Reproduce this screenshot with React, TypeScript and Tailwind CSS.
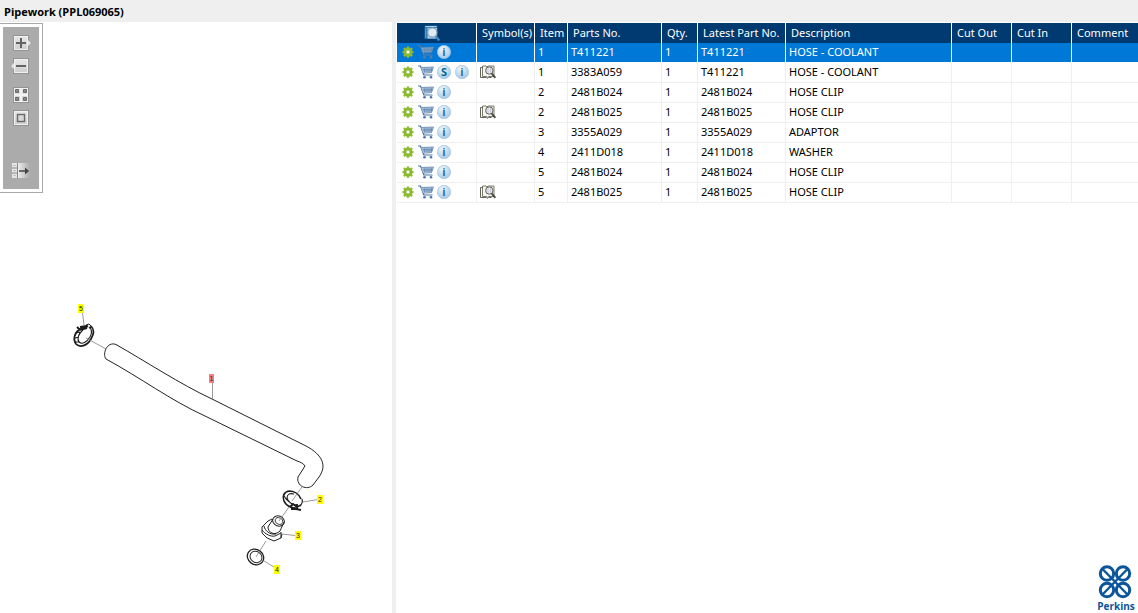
import React from "react";

type Part = {
  item: string;
  no: string;
  latest: string;
  desc: string;
  superseded?: boolean;
  book?: boolean;
};

const parts: Part[] = [
  { item: "1", no: "T411221", latest: "T411221", desc: "HOSE - COOLANT" },
  { item: "1", no: "3383A059", latest: "T411221", desc: "HOSE - COOLANT", superseded: true, book: true },
  { item: "2", no: "2481B024", latest: "2481B024", desc: "HOSE CLIP" },
  { item: "2", no: "2481B025", latest: "2481B025", desc: "HOSE CLIP", book: true },
  { item: "3", no: "3355A029", latest: "3355A029", desc: "ADAPTOR" },
  { item: "4", no: "2411D018", latest: "2411D018", desc: "WASHER" },
  { item: "5", no: "2481B024", latest: "2481B024", desc: "HOSE CLIP" },
  { item: "5", no: "2481B025", latest: "2481B025", desc: "HOSE CLIP", book: true },
];

const headers = ["Symbol(s)", "Item", "Parts No.", "Qty.", "Latest Part No.", "Description", "Cut Out", "Cut In", "Comment"];

function Gear() {
  return (
    <svg viewBox="0 0 13 12" className="block h-3 w-[13px]">
      <path
        d="M4.700 .5h2.600v1.400l1 .4 1-1 1.600 1.600-1 1 .4 1H11.500v2.400h-1.200l-.4 1 1 1-1.600 1.700-1-1-1 .4v1.400H4.700V10.400l-1-.4-1 1L1.100 9.300l1-1-.4-1H.5V4.900h1.200l.4-1-1-1L2.700 1.300l1 1 1-.4z"
        fill="#8dbb2f"
      />
      <circle cx="6" cy="6.100" r="2" fill="#fff" stroke="#79a424" strokeWidth=".6" />
    </svg>
  );
}

function Cart({ active }: { active: boolean }) {
  const c = active ? "#5f7f9f" : "#4a74a8";
  return (
    <svg viewBox="0 0 16 14" className="block h-3.5 w-4">
      <path d="M0 1h2.500l3.300 9h8.700" fill="none" stroke={c} strokeWidth="1.200" />
      <path d="M3.200 2.500L15.500 2l-2 5.500H5z" fill={active ? "#84b4e2" : "#dce7f3"} />
      <path d="M3.200 2.500L15.500 2l-2 5.500-8.300.8M3.800 4.200h11M4.400 5.900h9.800M6 2.500l.5 5M8 2.500v5M10 2.500v5M12 2.500l-.2 5M13.800 2.300l-.5 4" fill="none" stroke={c} strokeWidth=".7" />
      <circle cx="6.500" cy="12.200" r="1.300" fill={c} />
      <circle cx="13" cy="12.200" r="1.300" fill={c} />
    </svg>
  );
}

function Badge({ letter }: { letter: "i" | "S" }) {
  return (
    <svg viewBox="0 0 15 14" className="block h-3.5 w-[15px]">
      <defs>
        <radialGradient id="badge" cx=".4" cy=".3" r=".7">
          <stop offset="0" stopColor="#f0f7fc" />
          <stop offset="1" stopColor="#a3c8e4" />
        </radialGradient>
      </defs>
      <circle cx="7" cy="7" r="6.700" fill="url(#badge)" stroke="#9cc0de" strokeWidth=".6" />
      <text x="7" y="11" textAnchor="middle" fontSize="11" fontWeight="700" fontFamily="Noto Sans, sans-serif" fill={letter === "S" ? "#00668f" : "#2f6db0"}>
        {letter}
      </text>
    </svg>
  );
}

function Book() {
  return (
    <svg viewBox="0 0 16 14" className="block h-3.5 w-4">
      <path d="M2.500 1H6l1 .8L8.500 1H14v10.500H8.500l-1 .7-1-.7h-4z" fill="#f6f6f0" stroke="#6b6b5c" strokeWidth=".9" />
      <path d="M2.500 2.500h-2v10h6l1 .8 1-.8h3" fill="none" stroke="#55554a" strokeWidth=".9" />
      <circle cx="9.300" cy="5.500" r="3.700" fill="#e6e7f2" stroke="#5c5c55" strokeWidth="1" />
      <path d="M8 3.500v4M10.500 3.500v4" stroke="#b5b5c5" strokeWidth=".7" />
      <path d="M11.800 8.600l3.500 4.200" stroke="#45453c" strokeWidth="1.900" />
    </svg>
  );
}

function ListSearch() {
  return (
    <svg viewBox="0 0 16 16" className="block h-4 w-4" aria-label="Details">
      <path d="M.5 .5h13v13.500H.5z" fill="#1b6fa8" />
      <path d="M3.500 3H13v10.500H3.500z" fill="#a9d3ea" />
      <path d="M1.300 4h1M1.300 6h1M1.300 8h1M1.300 10h1M1.300 12h1M1.500 1.700h11" stroke="#e4f2fa" strokeWidth=".9" />
      <circle cx="8.300" cy="7.500" r="4.600" fill="#dfeaf3" stroke="#8aa0b4" strokeWidth="1.200" />
      <path d="M11.700 11.200l3.600 4.300" stroke="#3f86c4" strokeWidth="2.200" />
    </svg>
  );
}

type Tool = "in" | "out" | "fit" | "actual" | "panel";

function ToolIcon({ kind }: { kind: Tool }) {
  return (
    <svg viewBox="0 0 20 18" className="block h-[18px] w-5">
      <defs>
        <linearGradient id="key" x1="0" y1="0" x2="0" y2="1">
          <stop offset="0" stopColor="#e8e8e8" />
          <stop offset="1" stopColor="#cdcdcd" />
        </linearGradient>
        <linearGradient id="fade">
          <stop offset="0" stopColor="#ececec" />
          <stop offset="1" stopColor="#ababab" />
        </linearGradient>
      </defs>
      {kind !== "panel" && <rect x="2.500" y="1.500" width="15" height="15" fill="url(#key)" stroke="#949494" />}
      {kind !== "panel" && <rect x="3.500" y="2.500" width="13" height="13" fill="none" stroke="#f0f0f0" />}
      {kind === "in" && <path d="M17 6l3 3-3 3z" fill="#e4e4e4" />}
      {kind === "out" && <path d="M3 6L0 9l3 3z" fill="#e4e4e4" />}
      {kind === "in" && <path d="M5 9h10M10 4v10" stroke="#636363" strokeWidth="2" />}
      {kind === "out" && <path d="M5 9h10" stroke="#636363" strokeWidth="2" />}
      {kind === "fit" && (
        <g>
          <path d="M10 2v14M3 9h14" stroke="#f2f2f2" strokeWidth="2" />
          <path d="M4.500 3.500h3v3h-3zM12.500 3.500h3v3h-3zM4.500 11.500h3v3h-3zM12.500 11.500h3v3h-3z" fill="#8a8a8a" stroke="#6a6a6a" />
        </g>
      )}
      {kind === "actual" && <rect x="6.500" y="5.500" width="7" height="7" fill="#d8d8d8" stroke="#686868" strokeWidth="1.400" />}
      {kind === "panel" && (
        <g>
          <rect x="7" y="1" width="12" height="15" fill="url(#fade)" />
          <path d="M1 1h5v15H1z" fill="#e4e4e4" />
          <path d="M1 6h5M1 11h5M6.500 1v15" stroke="#8a8a8a" />
          <path d="M2.500 3.500h2M2.500 8.500h2M2.500 13.500h2" stroke="#b4b4b4" />
          <path d="M8 9h7" stroke="#444" strokeWidth="1.500" />
          <path d="M14 5.500L18 9l-4 3.500z" fill="#444" />
        </g>
      )}
    </svg>
  );
}

function ToolButton({ kind, label }: { kind: Tool; label: string }) {
  return (
    <button type="button" aria-label={label} className="block cursor-pointer">
      <ToolIcon kind={kind} />
    </button>
  );
}

function Callout({ x, y, n, active }: { x: number; y: number; n: string; active?: boolean }) {
  return (
    <g>
      <rect x={x} y={y} width={active ? 5 : 6} height="9" fill={active ? "#fa8080" : "#ffff00"} />
      <text x={x + (active ? 2.5 : 3)} y={y + 7} textAnchor="middle" fontSize="7" fontFamily="Liberation Sans, sans-serif" fill="#222">
        {n}
      </text>
    </g>
  );
}

function Diagram() {
  return (
    <svg viewBox="0 22 392 591" className="block w-full" role="img" aria-label="Pipework exploded view">
      <g fill="none" stroke="#222" strokeWidth="1">
        <path d="M116 344.500C145 361 180 384 212 399L306 446C323 455 327 466 319 477L313 485C307 491 296 486 298 477L305 466C303 463 300 462 297 461L205 416C170 400 141 378 106 359C102 354 107 341 116 344.500" />
      </g>
      <g fill="none" stroke="#1c1c1c">
        <path d="M79 330c-5 3-6 10-3 14 4 4 11 2 15-5 3-5 3-10 0-13" strokeWidth="1.700" />
        <path d="M83 330c-5 4-6 9-4 12 3 3 8 0 11-5 2-4 2-8-1-10M76 333l4-1M75 338l4-1M76 342l4 0" strokeWidth="1.100" />
        <path d="M79 330l9-4M77 327l3 3 7-2M80 327l7-1" strokeWidth="2" />
        <path d="M86 325l3-1 2 2-1 3" strokeWidth="1" />
        <path d="M298 508c-5 1-12-2-14-7-2-5 0-9 5-10 5 0 10 3 12 8" strokeWidth="1.700" />
        <path d="M297 505c-5 0-9-3-10-7 0-4 3-5 7-4M302 499c1 3 0 5-2 7M284 496c3 5 7 8 12 9" strokeWidth="1.100" />
        <path d="M290 507l3-3 4 3 4-2M291 509h5l5 1M297 504v5" strokeWidth="1.800" />
      </g>
      <g fill="none" stroke="#222">
        <path d="M272 519l-4 2-6 6v6l5 5 7 3 7-3 1-4M262 530c3 4 9 7 13 6l6-3M273 519l-5 8c0 6 7 9 12 4l4-9M264 526c1 5 6 9 12 8M281 532v6" />
        <ellipse cx="278.500" cy="521" rx="6" ry="5" transform="rotate(20 278.500 521)" />
        <ellipse cx="279" cy="521" rx="4" ry="3.200" transform="rotate(20 279 521)" strokeWidth=".8" />
        <ellipse cx="255.500" cy="557" rx="8.500" ry="7.500" transform="rotate(35 255.500 557)" strokeWidth="1.300" />
        <ellipse cx="256" cy="557" rx="6.200" ry="5.400" transform="rotate(35 256 557)" />
      </g>
      <g fill="none" stroke="#808080" strokeWidth=".8">
        <path d="M82.500 313l1.500 12M86 338l20 11M212.500 383v16M302 487l-10 14M303 502l15-2.500M289 507l-10 14M282 534l13 1.500M266 541l-10 16M264 561l10 6" />
      </g>
      <Callout x={78} y={304} n="5" />
      <Callout x={209} y={374} n="1" active />
      <Callout x={317} y={495} n="2" />
      <Callout x={295} y={531} n="3" />
      <Callout x={274} y={565} n="4" />
    </svg>
  );
}

function Logo() {
  return (
    <svg viewBox="0 0 42 48" className="h-12 w-[42px]" role="img" aria-label="Perkins">
      <g fill="none" stroke="#0b559c" strokeWidth="3">
        <circle cx="11" cy="8.500" r="6.700" />
        <circle cx="27" cy="8.500" r="6.700" />
        <circle cx="11" cy="25" r="6.700" />
        <circle cx="27" cy="25" r="6.700" />
        <path d="M6.500 4L31.500 29.500M31.500 4L6.500 29.500" strokeWidth="2.400" />
      </g>
      <text x="20" y="45" textAnchor="middle" fontSize="10" fontWeight="700" fontFamily="Open Sans, sans-serif" fill="#0b559c">
        Perkins
      </text>
    </svg>
  );
}

export default function App() {
  return (
    <div className="flex min-h-screen flex-col bg-white font-['Noto_Sans',sans-serif] text-[11px] leading-4 text-black">
      <header className="h-[22px] bg-[#efefef] px-1 pt-1">
        <h1 className="font-['Open_Sans',sans-serif] text-[11px] leading-4 font-bold">Pipework (PPL069065)</h1>
      </header>
      <main className="flex flex-1">
        <section className="relative w-[392px] shrink-0">
          <Diagram />
          <div className="absolute top-px left-0 border border-l-0 border-[#a9a9a9] bg-white p-[3px]">
            <div className="flex h-[162px] w-9 flex-col items-center bg-[#ababab] pt-[7px]">
              <div className="flex flex-col gap-[5px]">
                <ToolButton kind="in" label="Zoom in" />
                <ToolButton kind="out" label="Zoom out" />
              </div>
              <div className="flex flex-col gap-[5px] pt-[11px]">
                <ToolButton kind="fit" label="Fit to window" />
                <ToolButton kind="actual" label="Actual size" />
              </div>
              <div className="pt-[35px]">
                <ToolButton kind="panel" label="Toggle panel" />
              </div>
            </div>
          </div>
        </section>
        <section className="flex min-w-0 flex-1 flex-col justify-between border-l-4 border-[#efefef] pt-px pl-px">
          <table className="w-full table-fixed border-separate border-spacing-0">
            <colgroup>
              <col className="w-20" />
              <col className="w-[58px]" />
              <col className="w-[33px]" />
              <col className="w-[94px]" />
              <col className="w-9" />
              <col className="w-[88px]" />
              <col className="w-[166px]" />
              <col className="w-[60px]" />
              <col className="w-[60px]" />
              <col />
            </colgroup>
            <thead>
              <tr className="h-5 bg-[#003a70] text-white">
                <th className="border-r border-white p-0">
                  <div className="flex justify-center pr-2.5">
                    <ListSearch />
                  </div>
                </th>
                {headers.map((h) => (
                  <th key={h} className="border-r border-white p-0 pl-[5px] text-left font-normal whitespace-nowrap last:border-r-0">
                    {h}
                  </th>
                ))}
              </tr>
            </thead>
            <tbody>
              {parts.map((p, i) => {
                const cell = i === 0 ? "border-r border-b border-white p-0 pb-px pl-[3px] last:border-r-0" : "border-r border-b border-[#efefef] p-0 pb-px pl-[3px] last:border-r-0";
                return (
                  <tr key={i} className={i === 0 ? "h-5 bg-[#0078d7] text-white" : "h-5"}>
                    <td className={cell}>
                      <div className="flex h-4 items-center gap-[3px] pl-0.5">
                        <Gear />
                        <Cart active={i === 0} />
                        {p.superseded && <Badge letter="S" />}
                        <Badge letter="i" />
                      </div>
                    </td>
                    <td className={cell}>{p.book && <Book />}</td>
                    <td className={cell}>{p.item}</td>
                    <td className={cell}>{p.no}</td>
                    <td className={cell}>1</td>
                    <td className={cell}>{p.latest}</td>
                    <td className={cell}>{p.desc}</td>
                    <td className={cell} />
                    <td className={cell} />
                    <td className={cell} />
                  </tr>
                );
              })}
            </tbody>
          </table>
          <div className="flex justify-end">
            <Logo />
          </div>
        </section>
      </main>
    </div>
  );
}
